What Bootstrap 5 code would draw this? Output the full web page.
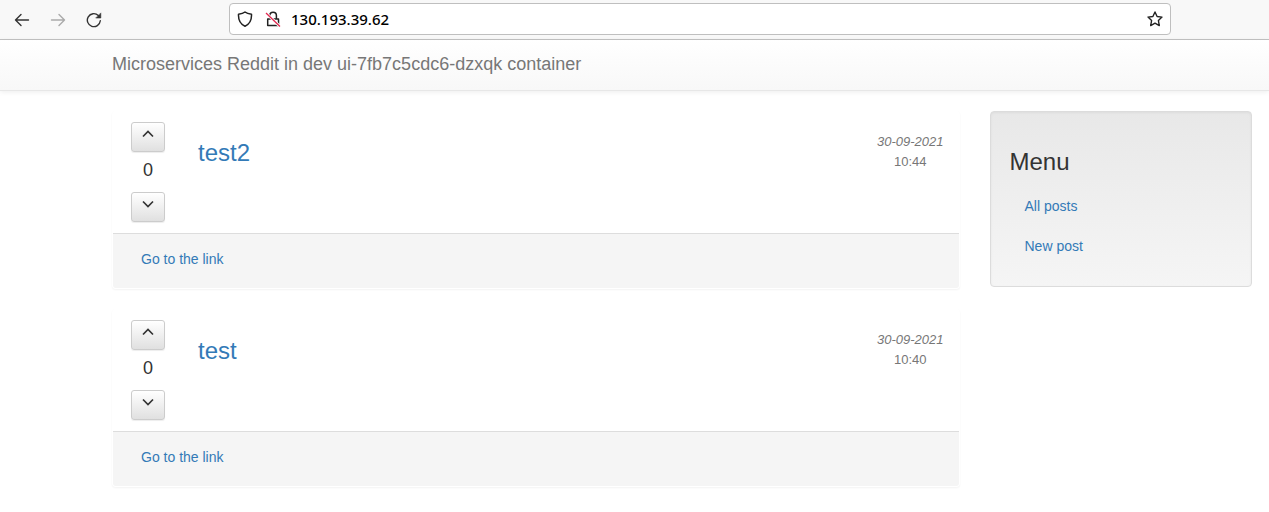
<!DOCTYPE html>
<html lang="en">
<head>
<meta charset="utf-8">
<meta name="viewport" content="width=device-width, initial-scale=1">
<title>Microservices Reddit</title>
<link href="https://cdn.jsdelivr.net/npm/bootstrap@5.3.0/dist/css/bootstrap.min.css" rel="stylesheet">
<style>
  body { font-family: "Liberation Sans", Arial, sans-serif; font-size: 14px; line-height: 20px; color: #333; background: #fff; }
  a { color: #337ab7; text-decoration: none; }
  /* browser toolbar */
  .toolbar { height: 40px; background: #f8f8f8; border-bottom: 1px solid #c2c2c2; }
  .tool-btn { padding: 0; border: 0; background: none; width: 16px; height: 16px; display: flex; flex: none; }
  .toolbar svg { display: block; }
  .nav-tools { width: 229px; padding-left: 14px; gap: 20px; }
  .address { height: 32px; margin-top: -2px; margin-right: 98px; padding: 0 7px; background: #fff; border: 1px solid #bfbfbf; border-radius: 4px; }
  .address input { border: 0; outline: 0; padding: 0; color: #000; font: 500 15px/20px "Noto Sans", sans-serif; min-width: 0; background: none; }
  /* page header */
  .site-header { height: 51px; padding: 0 112px; background: linear-gradient(#fff, #f8f8f8); border-bottom: 1px solid #e7e7e7; box-shadow: 0 1px 5px rgba(0,0,0,.075); }
  .site-header a { font-size: 18px; color: #777; padding-bottom: 2px; }
  .page { padding: 20px 2px 0 97px; overflow: hidden; }
  .page > .row { --bs-gutter-x: 30px; margin: 0; }
  .post { border: 1px solid transparent; border-radius: 4px; margin-bottom: 20px; box-shadow: 0 1px 2px rgba(0,0,0,.05); }
  .post-main { height: 121px; padding: 10px 15px 0 18px; }
  .votes { width: 34px; }
  .vote { width: 34px; height: 30px; padding: 0 0 6px; border: 1px solid #ccc; border-radius: 3px; background: linear-gradient(#fff, #e0e0e0); box-shadow: inset 0 1px 0 rgba(255,255,255,.15), 0 1px 1px rgba(0,0,0,.075); }
  .score { font-size: 18px; line-height: 20px; margin: 8px 0 12px; }
  .post h3 { font-size: 24px; line-height: 26px; margin: 18px 0 0 33px; }
  .stamp { color: #777; margin-top: 10px; font-size: 13px; }
  .post-foot { padding: 15px 28px 19px; background: #f5f5f5; border-top: 1px solid #ddd; border-radius: 0 0 3px 3px; }
  .side-menu { padding: 19px 19px 20px; background: linear-gradient(#e8e8e8, #f5f5f5); border: 1px solid #dcdcdc; border-radius: 4px; box-shadow: inset 0 1px 3px rgba(0,0,0,.05), 0 1px 0 rgba(255,255,255,.1); }
  .side-menu h3 { font-size: 24px; line-height: 26px; margin: 18px 0 11px; }
  .side-menu .nav-link { padding: 10px 15px; color: #337ab7; }
</style>
</head>
<body>
<div class="toolbar d-flex align-items-center">
  <div class="nav-tools d-flex align-items-center flex-shrink-0">
    <button class="tool-btn" aria-label="Back"><svg width="16" height="16" fill="none" stroke="#333" stroke-width="1.4" stroke-linecap="round" stroke-linejoin="round"><path d="M14.500 8H1.500M7 2.500L1.500 8 7 13.500"/></svg></button>
    <button class="tool-btn" aria-label="Forward"><svg width="16" height="16" fill="none" stroke="#aaa" stroke-width="1.4" stroke-linecap="round" stroke-linejoin="round"><path d="M1.500 8h13M9 2.500L14.500 8 9 13.500"/></svg></button>
    <button class="tool-btn" aria-label="Reload"><svg width="16" height="16" fill="none" stroke="#333" stroke-width="1.4" stroke-linecap="round"><path d="M14.300 8.800A6.500 6.500 0 1 1 12.300 3.400"/><path d="M14.800 1.300V6H10.100Z" fill="#333" stroke-width=".6" stroke-linejoin="round"/></svg></button>
  </div>
  <div class="address d-flex align-items-center flex-grow-1">
    <svg class="flex-shrink-0" width="16" height="16" fill="none" stroke="#222" stroke-width="1.5" stroke-linejoin="round"><path d="M8 1C6.400 2.400 4 3 1.500 3.200 1.200 9 3 13 8 15.200 13 13 14.800 9 14.500 3.200 12 3 9.600 2.400 8 1Z"/></svg>
    <svg class="flex-shrink-0 ms-2" width="22" height="16" viewBox="-4 0 22 16" fill="none" stroke="#222" stroke-width="1.5" stroke-linejoin="round"><path d="M4.800 7.500V4.500a3.300 3.300 0 0 1 6.600 0V7.500M2.700 8h10.800v6.500H2.700Z"/><path d="M1 2l14 13.500" stroke="#fff" stroke-width="3"/><path d="M1 2l14 13.500" stroke="#e22850" stroke-width="1.300"/></svg>
    <input class="flex-grow-1 ms-1 ps-1" type="text" value="130.193.39.62" aria-label="Address">
    <button class="tool-btn" aria-label="Bookmark this page"><svg width="16" height="16" fill="none" stroke="#222" stroke-width="1.400" stroke-linejoin="round"><path d="M8 1l2.100 4.500 4.900.6-3.600 3.400.9 5.100L8 12.200l-4.300 2.400.9-5.100L1 6.100l4.900-.6Z"/></svg></button>
  </div>
</div>
<header class="site-header d-flex align-items-center">
  <a href="#">Microservices Reddit in dev ui-7fb7c5cdc6-dzxqk container</a>
</header>
<div class="page">
  <div class="row">
    <main class="col-9">
      <article class="post">
        <div class="post-main d-flex align-items-start">
          <div class="votes text-center">
            <button class="vote d-flex align-items-center justify-content-center" aria-label="Vote up"><svg width="12" height="8" fill="none" stroke="#333" stroke-width="1.700"><path d="M1 6.500L6 1.500 11 6.500"/></svg></button>
            <div class="score">0</div>
            <button class="vote d-flex align-items-center justify-content-center" aria-label="Vote down"><svg width="12" height="8" fill="none" stroke="#333" stroke-width="1.700"><path d="M1 1.500L6 6.500 11 1.500"/></svg></button>
          </div>
          <h3 class="fw-normal"><a href="#">test2</a></h3>
          <div class="stamp ms-auto text-center"><em>30-09-2021</em><br>10:44</div>
        </div>
        <div class="post-foot"><a href="#">Go to the link</a></div>
      </article>
      <article class="post">
        <div class="post-main d-flex align-items-start">
          <div class="votes text-center">
            <button class="vote d-flex align-items-center justify-content-center" aria-label="Vote up"><svg width="12" height="8" fill="none" stroke="#333" stroke-width="1.700"><path d="M1 6.500L6 1.500 11 6.500"/></svg></button>
            <div class="score">0</div>
            <button class="vote d-flex align-items-center justify-content-center" aria-label="Vote down"><svg width="12" height="8" fill="none" stroke="#333" stroke-width="1.700"><path d="M1 1.500L6 6.500 11 1.500"/></svg></button>
          </div>
          <h3 class="fw-normal"><a href="#">test</a></h3>
          <div class="stamp ms-auto text-center"><em>30-09-2021</em><br>10:40</div>
        </div>
        <div class="post-foot"><a href="#">Go to the link</a></div>
      </article>
    </main>
    <aside class="col-3">
      <nav class="side-menu" aria-label="Menu">
        <h3 class="fw-normal">Menu</h3>
        <div class="nav flex-column">
          <a class="nav-link" href="#">All posts</a>
          <a class="nav-link" href="#">New post</a>
        </div>
      </nav>
    </aside>
  </div>
</div>
<script src="https://cdn.jsdelivr.net/npm/bootstrap@5.3.0/dist/js/bootstrap.bundle.min.js"></script>
</body>
</html>
